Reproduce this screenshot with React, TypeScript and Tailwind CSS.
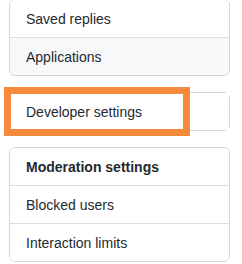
import React from "react";

function Row({ children, selected, bold, last }: { children: React.ReactNode; selected?: boolean; bold?: boolean; last?: boolean }) {
  return (
    <div
      className={`px-4 pt-[9px] pb-[7px] text-[14px] leading-[21px] text-[#24292f] ${last ? "" : "border-b border-[#d8dee4]"} ${selected ? "bg-[#f6f8fa]" : "bg-white"} ${bold ? "font-semibold" : ""}`}
    >
      {children}
    </div>
  );
}

export default function App() {
  return (
    <div className="w-[242px] h-[264px] bg-white overflow-hidden pl-[9px] pr-[12px] font-['Liberation_Sans',sans-serif]">
      <div className="flex flex-col gap-4 -mt-px">
        <div className="border border-[#d0d7de] rounded-md overflow-hidden">
          <Row>Saved replies</Row>
          <Row selected last>Applications</Row>
        </div>
        <div className="relative border border-[#d0d7de] rounded-md">
          <Row last>Developer settings</Row>
          <div className="absolute left-[-6px] top-[-6px] w-[186px] h-[49px] border-[7px] border-[#f68a3c]" />
        </div>
        <div className="border border-[#d0d7de] rounded-md overflow-hidden">
          <Row bold>Moderation settings</Row>
          <Row>Blocked users</Row>
          <Row last>Interaction limits</Row>
        </div>
      </div>
    </div>
  );
}
